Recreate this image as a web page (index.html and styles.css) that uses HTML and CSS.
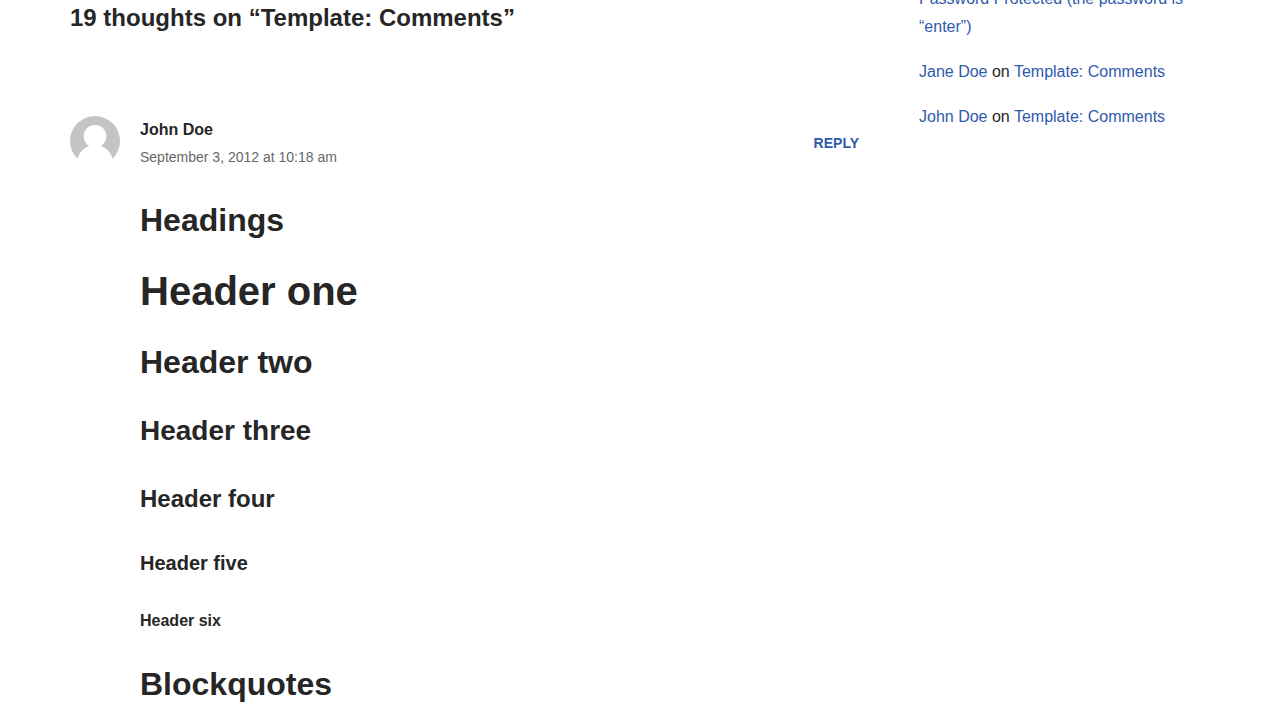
FILE: index.html
```html
<!DOCTYPE html>
<html lang="en">
<head>
<meta charset="utf-8">
<meta name="viewport" content="width=device-width, initial-scale=1">
<title>Template: Comments</title>
<link rel="stylesheet" href="styles.css">
</head>
<body>
<div class="container">
  <main class="comments">
    <h2 class="comments-title">19 thoughts on “Template: Comments”</h2>
    <article class="comment">
      <header class="comment-header">
        <svg class="avatar" viewBox="0 0 50 50" role="img" aria-label="John Doe">
          <circle cx="25" cy="25" r="25" fill="#c4c4c4"/>
          <circle cx="25" cy="20.300" r="11.300" fill="#fff"/>
          <path d="M6.500 50C6.500 38 14 29 25 29s18.500 9 18.500 21z" fill="#fff"/>
          <path d="M4 43.500h42V50H4z" fill="#fff"/>
        </svg>
        <div class="comment-author">
          <span class="author">John Doe</span>
          <time class="date" datetime="2012-09-03T10:18">September 3, 2012 at 10:18 am</time>
        </div>
        <a class="reply" href="#reply">Reply</a>
      </header>
      <div class="comment-content">
        <h2>Headings</h2>
        <h1>Header one</h1>
        <h2>Header two</h2>
        <h3>Header three</h3>
        <h4>Header four</h4>
        <h5>Header five</h5>
        <h6>Header six</h6>
        <h2>Blockquotes</h2>
      </div>
    </article>
  </main>
  <aside class="sidebar">
    <ul class="recent-comments">
      <li><a href="#protected">Password Protected (the password is “enter”)</a></li>
      <li><a href="#jane">Jane Doe</a> on <a href="#comments">Template: Comments</a></li>
      <li><a href="#john">John Doe</a> on <a href="#comments">Template: Comments</a></li>
    </ul>
  </aside>
</div>
</body>
</html>
```
FILE: styles.css
```css
* { box-sizing: border-box; }
body {
  margin: 0;
  height: 100vh;
  overflow: hidden;
  background: #fff;
  color: #272626;
  font: 16px/28px "Liberation Sans", Arial, sans-serif;
}
a { color: #2f5aae; text-decoration: none; }
.container {
  display: flex;
  max-width: 1170px;
  margin: 0 auto;
}
.comments { flex: 1; min-width: 0; padding: 0 15px; }
.comments-title { margin: 0; font-size: 24px; line-height: 36px; }
.comment { padding-top: 80px; }
.comment-header {
  display: flex;
  align-items: flex-start;
  gap: 20px;
  margin-bottom: 30px;
}
.avatar { flex: none; width: 50px; height: 50px; }
.comment-author { flex: 1; }
.author, .date { display: block; }
.author { font-weight: 700; }
.date { color: #676767; font-size: 14px; line-height: 26px; }
.reply {
  align-self: center;
  font-size: 14px;
  font-weight: 700;
  text-transform: uppercase;
}
.comment-content { padding-left: 70px; }
.comment-content h1,
.comment-content h2,
.comment-content h3,
.comment-content h4,
.comment-content h5,
.comment-content h6 { margin: 0 0 30px; }
.comment-content h1 { font-size: 40px; line-height: 42px; }
.comment-content h2 { font-size: 32px; line-height: 40px; }
.comment-content h3 { font-size: 28px; line-height: 38px; }
.comment-content h4 { font-size: 24px; line-height: 38px; }
.comment-content h5 { font-size: 20px; line-height: 30px; }
.comment-content h6 { font-size: 16px; line-height: 26px; }
.sidebar { flex: none; width: 30%; margin-top: -15px; padding: 0 15px 0 45px; }
.recent-comments { margin: 0; padding: 0; list-style: none; }
.recent-comments li { margin-bottom: 17px; }
```
